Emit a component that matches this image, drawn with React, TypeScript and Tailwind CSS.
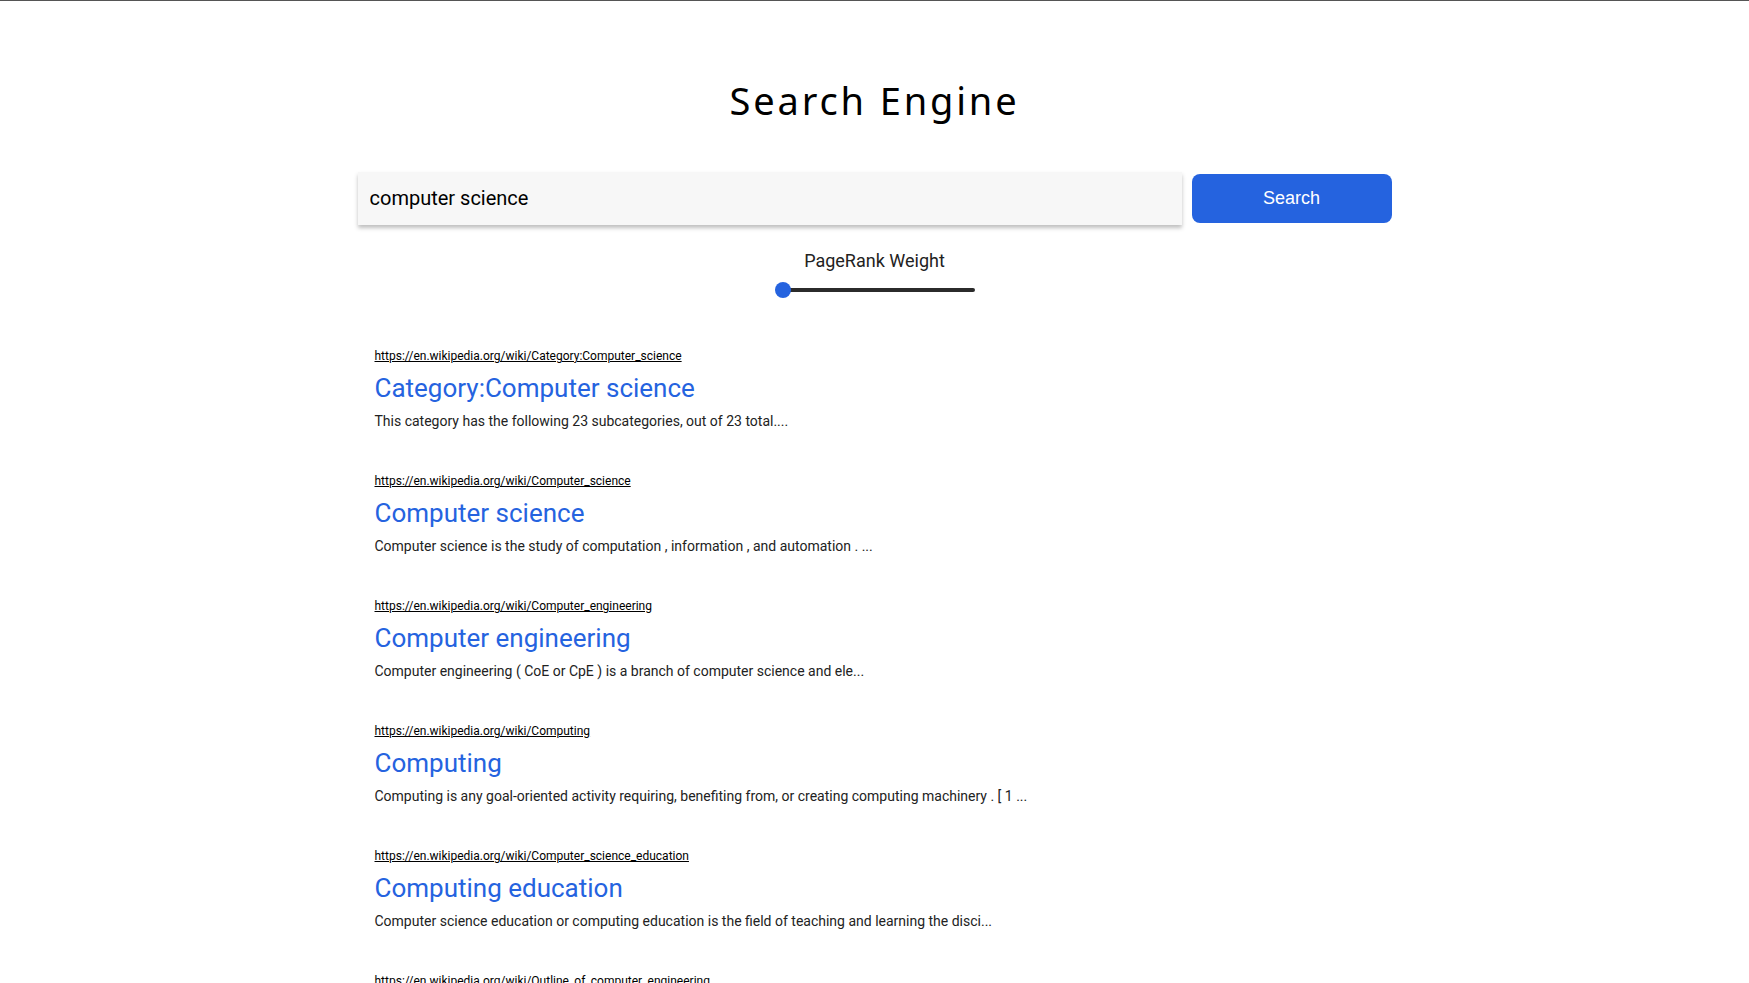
import { useState } from "react";

// ─── Data ────────────────────────────────────────────────────────────────────

type Result = {
  url: string;
  title: string;
  snippet: string;
};

const RESULTS: Result[] = [
  {
    url: "https://en.wikipedia.org/wiki/Category:Computer_science",
    title: "Category:Computer science",
    snippet: "This category has the following 23 subcategories, out of 23 total....",
  },
  {
    url: "https://en.wikipedia.org/wiki/Computer_science",
    title: "Computer science",
    snippet:
      "Computer science is the study of computation , information , and automation . ...",
  },
  {
    url: "https://en.wikipedia.org/wiki/Computer_engineering",
    title: "Computer engineering",
    snippet:
      "Computer engineering ( CoE or CpE ) is a branch of computer science and ele...",
  },
  {
    url: "https://en.wikipedia.org/wiki/Computing",
    title: "Computing",
    snippet:
      "Computing is any goal-oriented activity requiring, benefiting from, or creating computing machinery . [ 1 ...",
  },
  {
    url: "https://en.wikipedia.org/wiki/Computer_science_education",
    title: "Computing education",
    snippet:
      "Computer science education or computing education is the field of teaching and learning the disci...",
  },
  {
    url: "https://en.wikipedia.org/wiki/Outline_of_computer_engineering",
    title: "Outline of computer engineering",
    snippet:
      "The following outline is provided as an overview of and topical guide to computer engineering...",
  },
];

// ─── Pieces ──────────────────────────────────────────────────────────────────

function ResultItem({ url, title, snippet }: Result) {
  return (
    <div className="flex flex-col">
      <a
        href="#"
        className="text-[12px] leading-[16px] text-black underline decoration-1 underline-offset-1"
      >
        {url}
      </a>
      <a
        href="#"
        className="mt-[8px] text-[26px] leading-[32px] text-[#2563df]"
      >
        {title}
      </a>
      <p className="mt-[7px] text-[14px] leading-[20px] text-[#222]">
        {snippet}
      </p>
    </div>
  );
}

function WeightSlider() {
  return (
    <div className="relative mt-[9px] h-4 w-[200px]">
      <div className="absolute left-2 right-0 top-1.5 h-1 rounded-full bg-[#2b2b2b]" />
      <div className="absolute left-0 top-0 h-4 w-4 rounded-full bg-[#2563df]" />
    </div>
  );
}

// ─── App ─────────────────────────────────────────────────────────────────────

export default function App() {
  const [query, setQuery] = useState("computer science");

  return (
    <div
      className="min-h-screen border-t border-[#555] bg-white"
      style={{ fontFamily: "Roboto, 'Liberation Sans', sans-serif" }}
    >
      <div className="mx-auto flex w-[1034px] flex-col items-center">
        <h1
          className="mt-[75px] text-[38px] leading-[48px] tracking-[0.075em] text-black"
          style={{ fontFamily: "'Noto Sans', sans-serif" }}
        >
          Search Engine
        </h1>

        <div className="mt-[48px] flex w-full flex-row items-center gap-[10px]">
          <input
            value={query}
            onChange={(e) => setQuery(e.target.value)}
            className="h-[53px] flex-1 bg-[#f7f7f7] px-3 pb-0.5 text-[20px] text-black shadow-[0_3px_4px_rgba(0,0,0,0.25)] outline-none"
          />
          <button
            type="button"
            className="h-[49px] w-[200px] rounded-[8px] bg-[#2563df] text-[18px] text-white"
            style={{ fontFamily: "'Liberation Sans', Arial, sans-serif" }}
          >
            Search
          </button>
        </div>

        <span className="mt-[24px] text-[18px] leading-[24px] text-[#222]">
          PageRank Weight
        </span>
        <WeightSlider />

        <div className="mt-[50px] flex w-full flex-col gap-[42px] pl-[17px]">
          {RESULTS.map((r) => (
            <ResultItem key={r.url} {...r} />
          ))}
        </div>
      </div>
    </div>
  );
}
